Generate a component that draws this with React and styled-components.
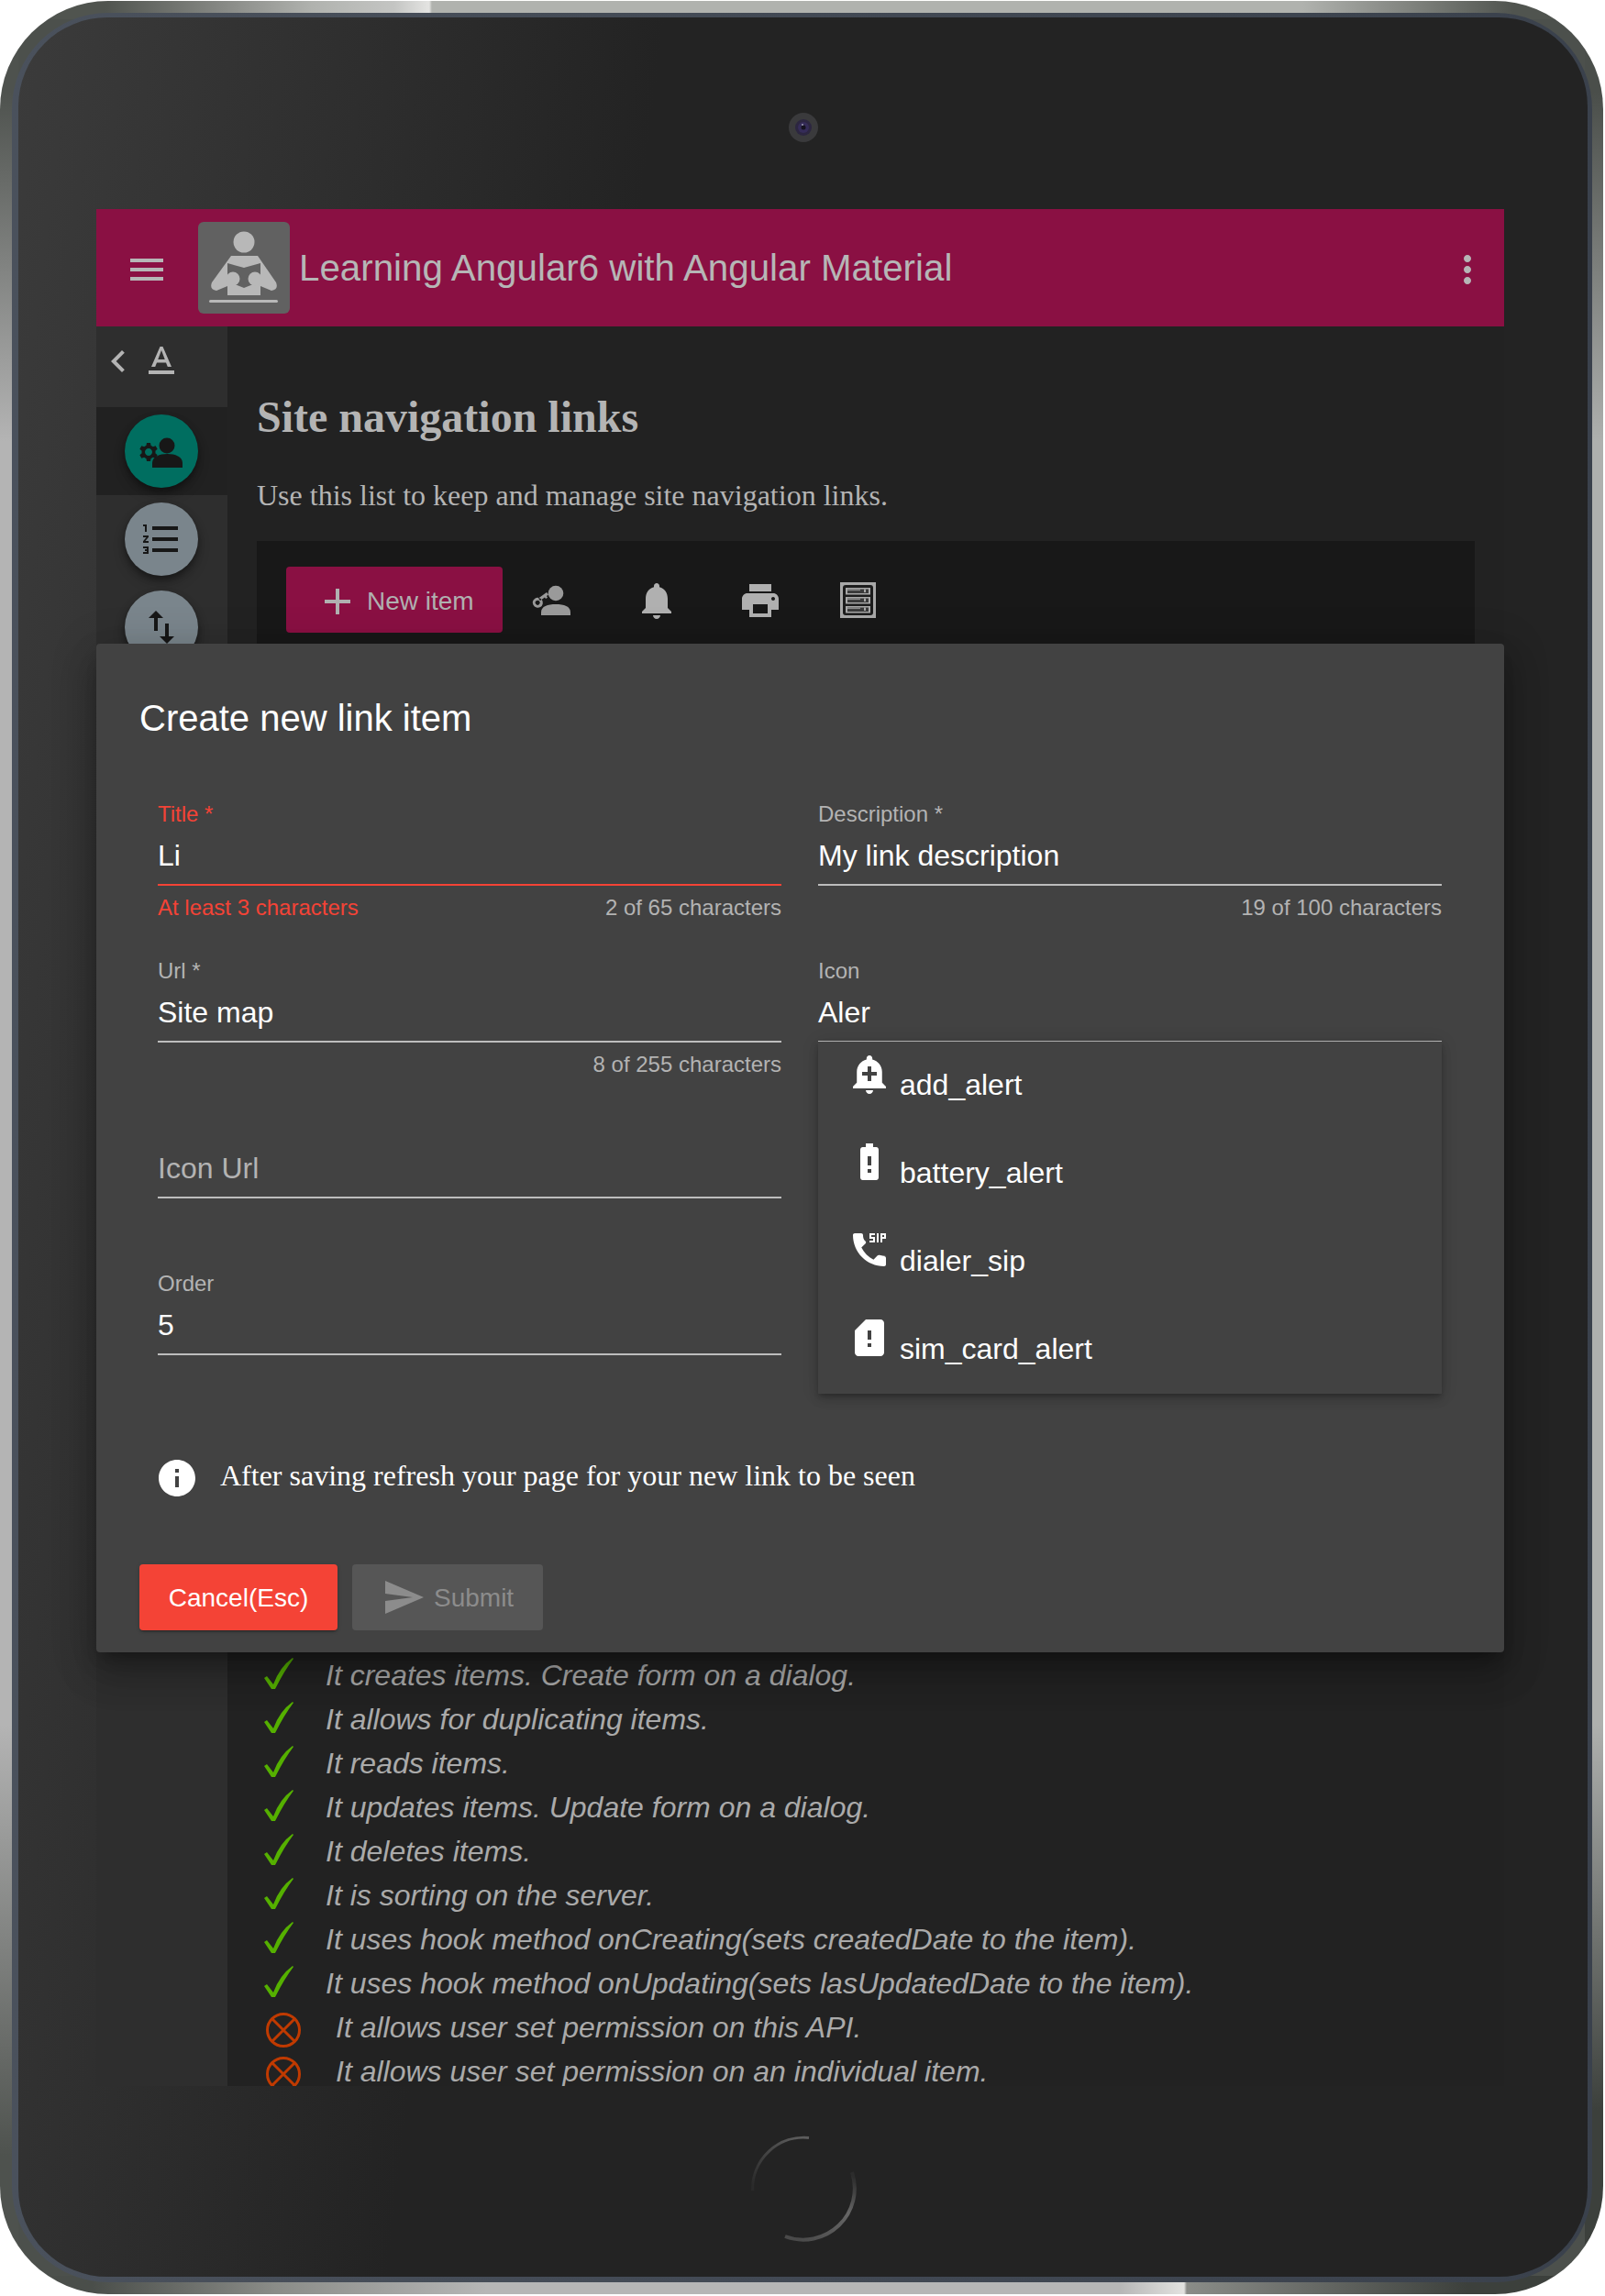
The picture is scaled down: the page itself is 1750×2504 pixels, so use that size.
import React from "react";
import styled, { createGlobalStyle } from "styled-components";

const Global = createGlobalStyle`
  html, body { margin: 0; padding: 0; background: #fff; }
  body { font-family: "Liberation Sans", Arial, sans-serif; }
  * { box-sizing: border-box; }
`;

const Page = styled.div`
  width: 1750px;
  height: 2504px;
  padding: 1px 2px 2px 0;
`;
const Tablet = styled.div`
  height: 2501px;
  border-radius: 118px;
  padding: 13px 12px 13px 13px;
  background-color: #4c504c;
  background-image:
    linear-gradient(90deg, #50544f 115px, #8a8c88 250px, #b0b2ae 340px, #c4c5c3 430px, #e4e4e2 468px, #b0b2ae 471px, #b0b2ae 1420px, #7f827d 1540px, #50544f 1650px),
    linear-gradient(90deg, #4a4e4a 100px, #8a8c88 300px, #b6b6b6 530px, #b6b6b6 1220px, #d8d8d6 1275px, #e2e2e0 1291px, #8a8c88 1294px, #3c403c 1600px),
    linear-gradient(180deg, #4e524e 100px, #b4b4b4 480px, #b4b4b4 1880px, #4e524e 2350px),
    linear-gradient(180deg, #4a4e4a 100px, #aeb0ae 480px, #aeb0ae 1880px, #3c403c 2300px);
  background-size: 100% 20px, 100% 20px, 20px 100%, 20px 100%;
  background-position: top left, bottom left, top left, top right;
  background-repeat: no-repeat;
`;
const Band = styled.div`
  height: 100%;
  border-radius: 105px;
  padding: 5px 5px 6px 7px;
  background: linear-gradient(90deg, #4a515c, #3a414c);
`;
const Screen = styled.div`
  position: relative;
  height: 100%;
  border-radius: 97px;
  padding: 209px 91px 208px 85px;
  background: linear-gradient(97deg, #3b3b3b 0, #232323 35%);
`;
const Camera = styled.svg`
  position: absolute;
  top: 104px;
  left: 50%;
  transform: translateX(-50%);
`;
const HomeRing = styled.svg`
  position: absolute;
  bottom: 36px;
  left: 50%;
  transform: translateX(-50%);
`;
const AppShell = styled.div`
  position: relative;
  display: flex;
  flex-direction: column;
  height: 100%;
  background: #222;
`;
const TopBar = styled.header`
  flex: none;
  display: flex;
  align-items: center;
  height: 128px;
  padding: 0 16px 0 31px;
  background: #8a1043;
  color: #b6b6b6;
  > svg { margin-top: 4px; }
`;
const LogoBox = styled.div`
  width: 100px;
  height: 100px;
  margin-left: 32px;
  border-radius: 6px;
  background: #616161;
`;
const AppTitle = styled.h1`
  flex: 1;
  margin: 2px 0 0 10px;
  font-size: 40.3px;
  line-height: 48px;
  font-weight: 400;
`;
const Body = styled.div`
  flex: 1;
  display: flex;
  min-height: 0;
  overflow: hidden;
`;
const Sidebar = styled.nav`
  flex: none;
  width: 143px;
  background: #2e2e2e;
  color: #b4b4b4;
`;
const SideHead = styled.div`
  display: flex;
  height: 88px;
  padding-top: 14px;
  svg + svg { margin-left: -1px; }
`;
const SideRow = styled.div`
  display: flex;
  justify-content: center;
  align-items: center;
  height: 96px;
  padding-right: 1px;
  background: ${(p) => (p.$active ? "#212121" : "transparent")};
`;
const Avatar = styled.div`
  display: flex;
  justify-content: center;
  align-items: center;
  width: 80px;
  height: 80px;
  border-radius: 50%;
  color: #171717;
  background: ${(p) => p.$color};
  box-shadow: 0 4px 7px rgba(0, 0, 0, 0.35), 0 8px 14px rgba(0, 0, 0, 0.2);
`;
const Main = styled.main`
  flex: 1;
  min-width: 0;
  padding: 71px 32px 0;
  background: #222;
  color: #b4b4b4;
`;
const PageHeading = styled.h2`
  margin: 0;
  font: 700 48px/56px "Liberation Serif", "Times New Roman", serif;
`;
const PageLead = styled.p`
  margin: 37px 0 30px;
  font: 400 32px/40px "Liberation Serif", "Times New Roman", serif;
`;
const ActionPanel = styled.section`
  display: flex;
  align-items: flex-start;
  height: 1190px;
  margin-bottom: 24px;
  padding: 28px 32px;
  background: #181818;
`;
const NewButton = styled.div`
  display: flex;
  align-items: center;
  width: 236px;
  height: 72px;
  padding: 3px 0 0 32px;
  border-radius: 4px;
  background: #8a1043;
  color: #b0b0b0;
  font-size: 28px;
  svg { margin-right: 8px; }
`;
const ToolIcon = styled.svg`
  flex: none;
  margin-top: 13px;
  margin-left: ${(p) => p.$gap}px;
  color: ${(p) => p.$color || "#b0b0b0"};
`;
const FeatureList = styled.ul`
  margin: 0;
  padding: 0;
  list-style: none;
`;
const FeatureRow = styled.li`
  display: flex;
  align-items: center;
  height: 48px;
  padding-left: ${(p) => (p.$no ? 10 : 8)}px;
  padding-bottom: 2px;
  color: #aaa;
  font-size: 32px;
  font-style: italic;
  white-space: nowrap;
`;
const RowIcon = styled.svg`
  flex: none;
  margin-right: ${(p) => (p.$no ? 38 : 35)}px;
  margin-top: ${(p) => (p.$no ? 5 : -4)}px;
`;
const Dialog = styled.section`
  position: absolute;
  left: 0;
  right: 0;
  top: 474px;
  height: 1100px;
  padding: 57px 48px 24px 47px;
  border-radius: 4px;
  background: #424242;
  color: #fff;
  box-shadow: 0 11px 15px -7px rgba(0, 0, 0, 0.3), 0 24px 38px 3px rgba(0, 0, 0, 0.2), 0 9px 46px 8px rgba(0, 0, 0, 0.14);
`;
const DialogTitle = styled.h3`
  margin: 0;
  font-size: 40px;
  line-height: 48px;
  font-weight: 400;
`;
const FormGrid = styled.div`
  display: grid;
  grid-template-columns: 680px 680px;
  column-gap: 40px;
  margin-top: 65px;
  padding-left: 20px;
`;
const Column = styled.div`
  display: flex;
  flex-direction: column;
`;
const Field = styled.div`
  height: 170.67px;
`;
const FieldLabel = styled.div`
  height: 30px;
  font-size: 24px;
  line-height: 31px;
  color: ${(p) => (p.$error ? "#f44336" : "#b3b3b3")};
`;
const FieldValue = styled.div`
  height: 40px;
  margin-top: 11px;
  margin-bottom: 11px;
  font-size: 32px;
  line-height: 40px;
  color: ${(p) => (p.$placeholder ? "#b3b3b3" : "#fff")};
`;
const FieldLine = styled.div`
  position: relative;
  height: 2px;
  background: ${(p) => (p.$error ? "#f44336" : "#bdbdbd")};
`;
const FieldHints = styled.div`
  display: flex;
  justify-content: space-between;
  margin-top: 10px;
  font-size: 24px;
  line-height: 28px;
  color: #b3b3b3;
`;
const HintError = styled.span`
  color: #f44336;
`;
const Dropdown = styled.div`
  position: absolute;
  z-index: 2;
  top: 1px;
  left: 0;
  right: 0;
  height: 384px;
  background: #424242;
  box-shadow: 0 3px 5px -1px rgba(0, 0, 0, 0.2), 0 6px 10px rgba(0, 0, 0, 0.14), 0 1px 18px rgba(0, 0, 0, 0.12);
`;
const Option = styled.div`
  display: flex;
  align-items: center;
  height: 96px;
  padding-left: 32px;
  font-size: 32px;
  color: #fff;
  svg { margin: 0 9px 26px 0; }
`;
const Note = styled.div`
  display: flex;
  align-items: center;
  height: 48px;
  margin-top: 33px;
  padding-left: 17px;
  font: 400 32px/48px "Liberation Serif", "Times New Roman", serif;
  svg { margin-right: 23px; }
`;
const NoteText = styled.span`
  margin-bottom: 6px;
`;
const Buttons = styled.div`
  display: flex;
  gap: 16px;
  margin-top: 70px;
`;
const CancelButton = styled.div`
  display: flex;
  justify-content: center;
  align-items: center;
  width: 216px;
  height: 72px;
  padding-top: 3px;
  border-radius: 4px;
  background: #f44336;
  color: #fff;
  font-size: 28px;
  box-shadow: 0 3px 1px -2px rgba(0, 0, 0, 0.2), 0 2px 2px rgba(0, 0, 0, 0.14), 0 1px 5px rgba(0, 0, 0, 0.12);
`;
const SubmitButton = styled.div`
  display: flex;
  align-items: center;
  width: 208px;
  height: 72px;
  padding: 3px 0 0 32px;
  border-radius: 4px;
  background: #565656;
  color: #8c8c8c;
  font-size: 28px;
  svg { margin: -3px 9px 0 0; }
`;

const Mi = ({ d, size = 48, ...rest }) => (
  <svg width={size} height={size} viewBox="0 0 24 24" fill="currentColor" {...rest}>
    <path d={d} />
  </svg>
);

const P = {
  menu: "M3 18h18v-2H3v2zm0-5h18v-2H3v2zm0-7v2h18V6H3z",
  more: "M12 8c1.1 0 2-.9 2-2s-.9-2-2-2-2 .9-2 2 .9 2 2 2zm0 2c-1.1 0-2 .9-2 2s.9 2 2 2 2-.9 2-2-.9-2-2-2zm0 6c-1.1 0-2 .9-2 2s.9 2 2 2 2-.9 2-2-.9-2-2-2z",
  chevron: "M15.41 7.41L14 6l-6 6 6 6 1.41-1.41L10.83 12z",
  textFormat: "M5 17v2h14v-2H5zm4.5-4.2h5l.9 2.2h2.1L12.75 4h-1.5L6.5 15h2.1l.9-2.2zM12 5.98L13.87 11h-3.74L12 5.98z",
  list: "M2 17h2v.5H3v1h1v.5H2v1h3v-4H2v1zm1-9h1V4H2v1h1v3zm-1 3h1.8L2 13.1v.9h3v-1H3.2L5 10.9V10H2v1zm5-6v2h14V5H7zm0 14h14v-2H7v2zm0-6h14v-2H7v2z",
  swap: "M16 17.01V10h-2v7.01h-3L15 21l4-3.99h-3zM9 3L5 6.99h3V14h2V6.99h3L9 3z",
  add: "M19 13h-6v6h-2v-6H5v-2h6V5h2v6h6v2z",
  bell: "M12 22c1.1 0 2-.9 2-2h-4c0 1.1.89 2 2 2zm6-6v-5c0-3.07-1.64-5.64-4.5-6.32V4c0-.83-.67-1.5-1.5-1.5s-1.5.67-1.5 1.5v.68C7.63 5.36 6 7.92 6 11v5l-2 2v1h16v-1l-2-2z",
  print: "M19 8H5c-1.66 0-3 1.34-3 3v6h4v4h12v-4h4v-6c0-1.66-1.34-3-3-3zm-3 11H8v-5h8v5zm3-7c-.55 0-1-.45-1-1s.45-1 1-1 1 .45 1 1-.45 1-1 1zm-1-9H6v4h12V3z",
  addAlert: "M10.01 21.01c0 1.1.89 1.99 1.99 1.99s1.99-.89 1.99-1.99h-3.98zm8.87-4.19V11c0-3.25-2.25-5.97-5.29-6.69v-.72C13.59 2.71 12.88 2 12 2s-1.59.71-1.59 1.59v.72C7.37 5.03 5.12 7.75 5.12 11v5.82L3 18.94V20h18v-1.06l-2.12-2.12zM16 13.01h-3v3h-2v-3H8V11h3V8h2v3h3v2.01z",
  battery: "M15.67 4H14V2h-4v2H8.33C7.6 4 7 4.6 7 5.33v15.33C7 21.4 7.6 22 8.33 22h7.33c.74 0 1.34-.6 1.34-1.33V5.33C17 4.6 16.4 4 15.67 4zM13 18h-2v-2h2v2zm0-4h-2V9h2v5z",
  dialer: "M17 3h-1v5h1V3zm-2 2h-2V4h2V3h-3v3h2v1h-2v1h3V5zm3-2v5h1V6h2V3h-3zm2 2h-1V4h1v1zm1 10.5c-1.25 0-2.45-.2-3.57-.57-.35-.11-.74-.03-1.02.24l-2.2 2.2c-2.83-1.44-5.15-3.75-6.59-6.59l2.2-2.21c.28-.26.36-.65.25-1C8.7 6.45 8.5 5.25 8.5 4c0-.55-.45-1-1-1H4c-.55 0-1 .45-1 1 0 9.39 7.61 17 17 17 .55 0 1-.45 1-1v-3.5c0-.55-.45-1-1-1z",
  sim: "M18 2h-8L4.02 8 4 20c0 1.1.9 2 2 2h12c1.1 0 2-.9 2-2V4c0-1.1-.9-2-2-2zm-5 15h-2v-2h2v2zm0-4h-2V8h2v5z",
  info: "M12 2C6.48 2 2 6.48 2 12s4.48 10 10 10 10-4.48 10-10S17.52 2 12 2zm1 15h-2v-6h2v6zm0-8h-2V7h2v2z",
  send: "M2.01 21L23 12 2.01 3 2 10l15 2-15 2z",
  gear: "M20.75 16c0-.22-.03-.42-.06-.63l1.14-1.01-1-1.73-1.45.49c-.32-.27-.68-.48-1.08-.63L18 11h-2l-.3 1.49c-.4.15-.76.36-1.08.63l-1.45-.49-1 1.73 1.14 1.01c-.03.21-.06.41-.06.63s.03.42.06.63l-1.14 1.01 1 1.73 1.45-.49c.32.27.68.48 1.08.63L16 21h2l.3-1.49c.4-.15.76-.36 1.08-.63l1.45.49 1-1.73-1.14-1.01c.03-.21.06-.41.06-.63zM17 18c-1.1 0-2-.9-2-2s.9-2 2-2 2 .9 2 2-.9 2-2 2z",
};

const Logo = () => (
  <LogoBox>
    <svg width="100" height="100" viewBox="0 0 100 100">
      <circle cx="50" cy="22" r="11.5" fill="#b8b8b8" />
      <path d="M36 37H65L85 66Q88 74 80 75L68 70V80H32V70L20 75Q12 74 15 66Z" fill="#b8b8b8" />
      <path d="M32 45L50 50L68 45V60L60 62V68L50 72L40 68V62L32 60Z" fill="#616161" />
      <circle cx="38" cy="62" r="7.5" fill="#b8b8b8" />
      <circle cx="62" cy="62" r="7.5" fill="#b8b8b8" />
      <rect x="12" y="85" width="75" height="3" rx="1.5" fill="#b8b8b8" />
    </svg>
  </LogoBox>
);

const ManageIcon = () => (
  <svg width="52" height="36" viewBox="0 0 52 36" fill="currentColor">
    <g transform="translate(-22 -13) scale(2)"><path d={P.gear} /></g>
    <circle cx="32" cy="12" r="8.5" />
    <path d="M16 36v-5c0-7 8-10 16.5-10S49 24 49 31v5z" />
  </svg>
);

const KeyPerson = () => (
  <ToolIcon $gap={28} $color="#9a9a9a" width="48" height="48" viewBox="0 0 48 48" fill="currentColor">
    <circle cx="30" cy="16" r="8.3" />
    <path d="M14 40v-3c0-7 7-9 16-9s16 2 16 9v3z" />
    <path fillRule="evenodd" d="M7 22a5.5 5.5 0 1 1-1.5 6.8a5.5 5.5 0 0 1 1.5-6.8zm1.7 2.3a2.5 2.5 0 1 0 3 4a2.5 2.5 0 0 0-3-4zM11 21.5l9-6.5l2 2.6l-2 1.5l1 1.6l-2 1.4l-1-1.6l-5 3.6z" />
  </ToolIcon>
);

const ServerIcon = () => (
  <ToolIcon $gap={59} width="48" height="48" viewBox="0 0 48 48">
    <rect x="4" y="4" width="39" height="39" fill="#a8a8a8" />
    <rect x="7" y="7" width="33" height="33" rx="3" fill="#1c1c1c" />
    {[10, 20, 30].map((y) => (
      <g key={y}>
        <rect x="10" y={y} width="27" height="7.5" fill="#a8a8a8" />
        <rect x="12" y={y + 1.5} width="23" height="4.5" fill="#3a3a3a" />
        <rect x="12" y={y + 1.5} width="14" height="1.6" fill="#8c8c8c" />
        <rect x="30" y={y + 1.5} width="2" height="3.5" fill="#a8a8a8" />
      </g>
    ))}
  </ToolIcon>
);

const Tick = () => (
  <RowIcon width="32" height="34" viewBox="0 0 32 34">
    <path d="M0 22L3 20L10 29Q17 10 31 0L32 1Q22 14 12 34L8 34Z" fill="#55b000" />
  </RowIcon>
);
const Cross = () => (
  <RowIcon $no width="38" height="38" viewBox="0 0 38 38" fill="none" stroke="#c03a00" strokeWidth="3">
    <circle cx="19" cy="19" r="17.5" />
    <path d="M7 7L31 31M31 7L7 31" />
  </RowIcon>
);

const features = [
  "It creates items. Create form on a dialog.",
  "It allows for duplicating items.",
  "It reads items.",
  "It updates items. Update form on a dialog.",
  "It deletes items.",
  "It is sorting on the server.",
  "It uses hook method onCreating(sets createdDate to the item).",
  "It uses hook method onUpdating(sets lasUpdatedDate to the item).",
];
const missing = ["It allows user set permission on this API.", "It allows user set permission on an individual item."];
const options = [
  ["addAlert", "add_alert"],
  ["battery", "battery_alert"],
  ["dialer", "dialer_sip"],
  ["sim", "sim_card_alert"],
];

export default function App() {
  return (
    <Page>
      <Global />
      <Tablet>
        <Band>
          <Screen>
            <Camera width="32" height="32" viewBox="0 0 32 32">
              <circle cx="16" cy="16" r="16" fill="#3a3a3c" />
              <circle cx="16" cy="16" r="9" fill="#2c2640" />
              <circle cx="16" cy="16" r="6" fill="#352c58" />
              <circle cx="16" cy="16" r="2.5" fill="#15131f" />
              <circle cx="15" cy="13" r="1" fill="#9a9ab0" />
            </Camera>
            <HomeRing width="120" height="120" viewBox="0 0 120 120" fill="none">
              <defs>
                <linearGradient id="ringA" x1="0.8" y1="0" x2="0" y2="0.9">
                  <stop offset="0" stopColor="#5c5c5c" />
                  <stop offset="1" stopColor="#2a2a2a" />
                </linearGradient>
                <linearGradient id="ringB" x1="0.9" y1="0" x2="0.2" y2="1">
                  <stop offset="0" stopColor="#2c2c2c" />
                  <stop offset="0.4" stopColor="#666" />
                  <stop offset="1" stopColor="#4a4a4a" />
                </linearGradient>
              </defs>
              <path d="M66 4.4A56 56 0 0 0 4.6 62" stroke="url(#ringA)" strokeWidth="3" />
              <path d="M113 42A56 56 0 0 1 40 112" stroke="url(#ringB)" strokeWidth="4" />
            </HomeRing>
            <AppShell>
              <TopBar>
                <Mi d={P.menu} />
                <Logo />
                <AppTitle>Learning Angular6 with Angular Material</AppTitle>
                <Mi d={P.more} />
              </TopBar>
              <Body>
                <Sidebar>
                  <SideHead>
                    <Mi d={P.chevron} />
                    <Mi d={P.textFormat} />
                  </SideHead>
                  <SideRow $active>
                    <Avatar $color="#006e60"><ManageIcon /></Avatar>
                  </SideRow>
                  <SideRow>
                    <Avatar $color="#7a858c"><Mi d={P.list} /></Avatar>
                  </SideRow>
                  <SideRow>
                    <Avatar $color="#7a858c"><Mi d={P.swap} /></Avatar>
                  </SideRow>
                </Sidebar>
                <Main>
                  <PageHeading>Site navigation links</PageHeading>
                  <PageLead>Use this list to keep and manage site navigation links.</PageLead>
                  <ActionPanel>
                    <NewButton>
                      <Mi d={P.add} />
                      New item
                    </NewButton>
                    <KeyPerson />
                    <ToolIcon as={Mi} d={P.bell} $gap={68} />
                    <ToolIcon as={Mi} d={P.print} $gap={65} />
                    <ServerIcon />
                  </ActionPanel>
                  <FeatureList>
                    {features.map((t) => (
                      <FeatureRow key={t}><Tick />{t}</FeatureRow>
                    ))}
                    {missing.map((t) => (
                      <FeatureRow key={t} $no><Cross />{t}</FeatureRow>
                    ))}
                  </FeatureList>
                </Main>
              </Body>
              <Dialog>
                <DialogTitle>Create new link item</DialogTitle>
                <FormGrid>
                  <Column>
                    <Field>
                      <FieldLabel $error>Title *</FieldLabel>
                      <FieldValue>Li</FieldValue>
                      <FieldLine $error />
                      <FieldHints><HintError>At least 3 characters</HintError><span>2 of 65 characters</span></FieldHints>
                    </Field>
                    <Field>
                      <FieldLabel>Url *</FieldLabel>
                      <FieldValue>Site map</FieldValue>
                      <FieldLine />
                      <FieldHints><span /><span>8 of 255 characters</span></FieldHints>
                    </Field>
                    <Field>
                      <FieldLabel />
                      <FieldValue $placeholder>Icon Url</FieldValue>
                      <FieldLine />
                    </Field>
                    <Field>
                      <FieldLabel>Order</FieldLabel>
                      <FieldValue>5</FieldValue>
                      <FieldLine />
                    </Field>
                  </Column>
                  <Column>
                    <Field>
                      <FieldLabel>Description *</FieldLabel>
                      <FieldValue>My link description</FieldValue>
                      <FieldLine />
                      <FieldHints><span /><span>19 of 100 characters</span></FieldHints>
                    </Field>
                    <Field>
                      <FieldLabel>Icon</FieldLabel>
                      <FieldValue>Aler</FieldValue>
                      <FieldLine>
                        <Dropdown>
                          {options.map(([icon, label]) => (
                            <Option key={label}><Mi d={P[icon]} />{label}</Option>
                          ))}
                        </Dropdown>
                      </FieldLine>
                    </Field>
                  </Column>
                </FormGrid>
                <Note>
                  <Mi d={P.info} />
                  <NoteText>After saving refresh your page for your new link to be seen</NoteText>
                </Note>
                <Buttons>
                  <CancelButton>Cancel(Esc)</CancelButton>
                  <SubmitButton>
                    <Mi d={P.send} />
                    Submit
                  </SubmitButton>
                </Buttons>
              </Dialog>
            </AppShell>
          </Screen>
        </Band>
      </Tablet>
    </Page>
  );
}
